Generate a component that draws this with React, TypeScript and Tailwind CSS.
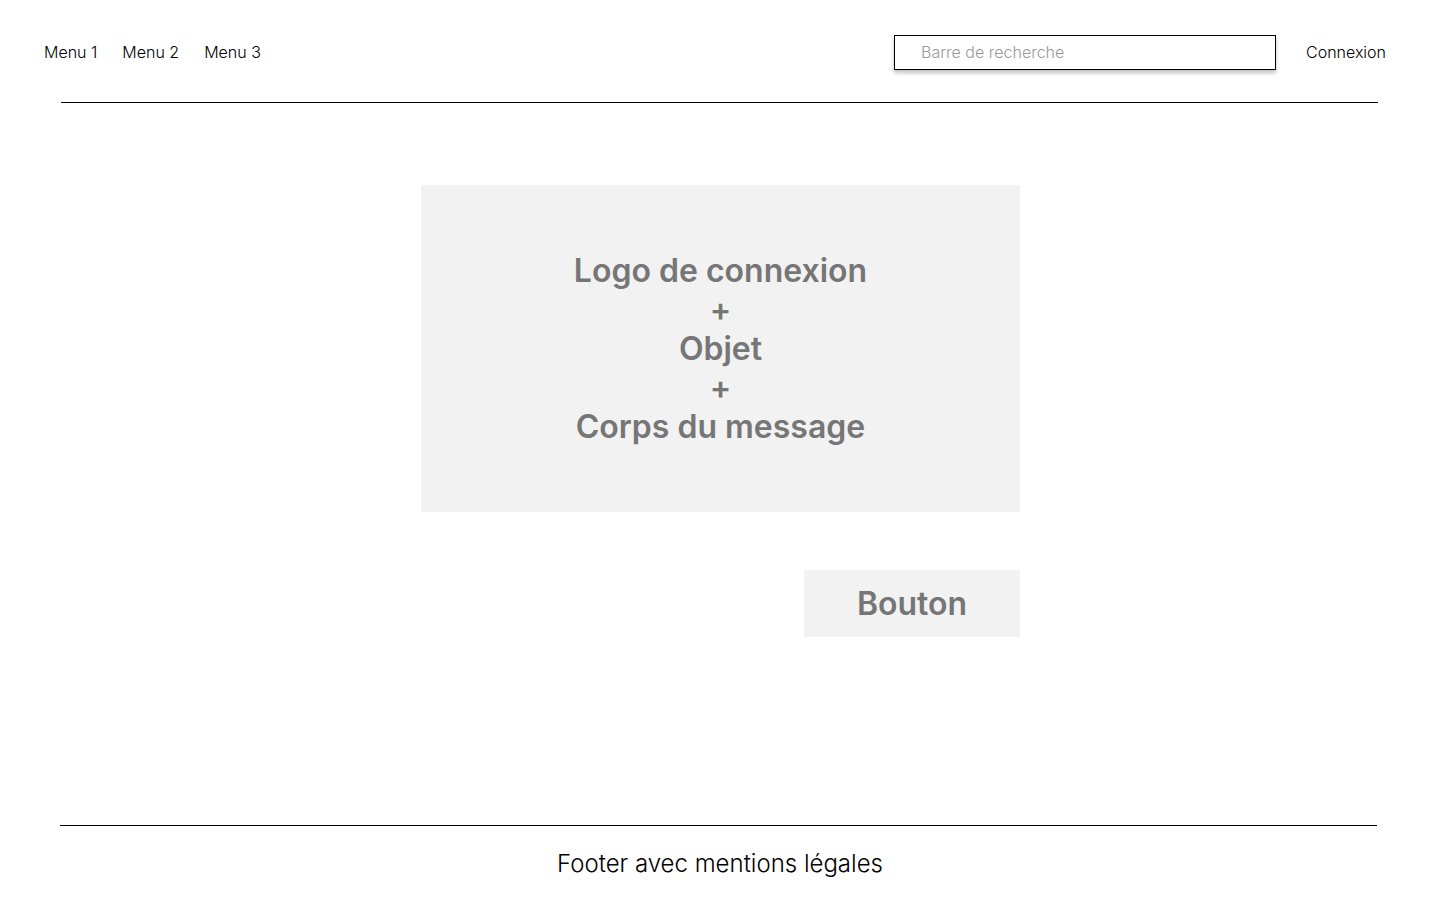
import React from 'react';

const menus = ['Menu 1', 'Menu 2', 'Menu 3'];

const App: React.FC = () => {
  return (
    <div className="min-h-screen bg-white text-black font-['Inter','Liberation_Sans',sans-serif]">
      {/* Header */}
      <header className="flex items-center justify-between pl-[44px] pr-[54px] pt-[35px]">
        <nav className="flex items-center gap-[25px] pb-[2px] text-[16px] font-light">
          {menus.map((m) => (
            <span key={m}>{m}</span>
          ))}
        </nav>
        <div className="flex items-center gap-[30px]">
          <div className="flex h-[35px] w-[382px] items-center border border-black bg-white pb-[1px] pl-[26px] text-[16px] font-light text-[#9a9a9a] shadow-[0_3px_4px_rgba(0,0,0,0.25)]">
            Barre de recherche
          </div>
          <span className="pb-[2px] text-[16px] font-light">Connexion</span>
        </div>
      </header>
      <div className="ml-[61px] mt-[32px] w-[1317px] border-t border-black" />

      {/* Contenu */}
      <main className="ml-[421px] mt-[82px] w-[599px]">
        <div className="flex h-[327px] flex-col items-center justify-center bg-[#f2f2f2] text-center text-[32px] font-semibold leading-[39px] text-[#767676]">
          <span>Logo de connexion</span>
          <span>+</span>
          <span>Objet</span>
          <span>+</span>
          <span>Corps du message</span>
        </div>
        <div className="mt-[58px] flex justify-end">
          <button className="flex h-[67px] w-[216px] items-center justify-center bg-[#f2f2f2] text-[32px] font-semibold text-[#767676]">
            Bouton
          </button>
        </div>
      </main>

      {/* Footer */}
      <footer className="mt-[188px]">
        <div className="ml-[60px] w-[1317px] border-t border-black" />
        <p className="mt-[20px] text-center text-[24px] font-light">Footer avec mentions légales</p>
      </footer>
    </div>
  );
};

export default App;
